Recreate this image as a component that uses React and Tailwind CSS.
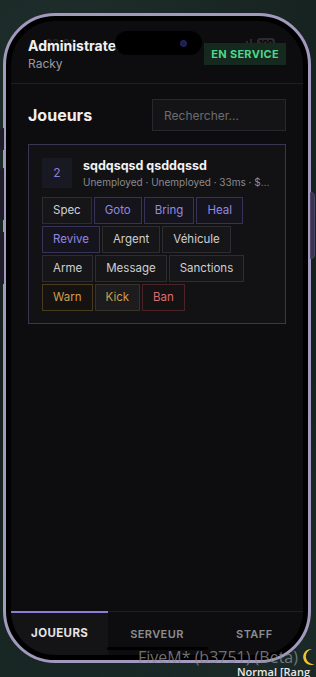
import React, { useState } from "react";

const actions = [
  { label: "Spec", tone: "plain" },
  { label: "Goto", tone: "purple" },
  { label: "Bring", tone: "purple" },
  { label: "Heal", tone: "purple" },
  { label: "Revive", tone: "purple" },
  { label: "Argent", tone: "plain" },
  { label: "Véhicule", tone: "plain" },
  { label: "Arme", tone: "plain" },
  { label: "Message", tone: "plain" },
  { label: "Sanctions", tone: "plain" },
  { label: "Warn", tone: "amber" },
  { label: "Kick", tone: "amberSoft" },
  { label: "Ban", tone: "red" },
];

const toneClass = {
  plain: "border-[#2c2c31] bg-[#161619] text-[#cfcfd2]",
  purple: "border-[#36325a] bg-[#15141d] text-[#9488e0]",
  amber: "border-[#4a3b1f] bg-[#141312] text-[#cf9d4c]",
  amberSoft: "border-[#37322a] bg-[#1c1c1f] text-[#cf9d4c]",
  red: "border-[#4a2328] bg-[#141213] text-[#db6b72]",
};

const tabs = ["Joueurs", "Serveur", "Staff"];

const App = () => {
  const [tab, setTab] = useState("Joueurs");
  const [query, setQuery] = useState("");

  return (
    <div
      className="relative w-[316px] h-[677px] overflow-hidden bg-[#15211f] pt-[13px] pl-[3px]"
      style={{
        backgroundImage:
          "radial-gradient(circle at 20% 10%, #1f2f2c 0%, transparent 45%), radial-gradient(circle at 85% 90%, #1b2a28 0%, transparent 40%), radial-gradient(circle at 10% 95%, #182624 0%, transparent 40%)",
        fontFamily: "Inter, 'Noto Sans', sans-serif",
      }}
    >
      {/* phone side buttons */}
      <div className="absolute left-[0px] top-[128px] w-[4px] h-[22px] rounded-l bg-[#201d2a]" />
      <div className="absolute left-[0px] top-[168px] w-[4px] h-[52px] rounded-l bg-[#201d2a]" />
      <div className="absolute left-[0px] top-[232px] w-[4px] h-[52px] rounded-l bg-[#201d2a]" />
      <div className="absolute left-[310px] top-[192px] w-[5px] h-[67px] rounded-r bg-[#3a3450] border border-[#4d4666]" />

      {/* phone */}
      <div className="w-[308px] h-[650px] rounded-[52px] border-[3px] border-[#a299bf] bg-black p-[5px] flex">
        <div className="relative flex-1 rounded-[44px] bg-[#0d0d10] flex flex-col overflow-hidden">
          {/* status bar (behind header) */}
          <div className="absolute top-[14px] left-[34px] right-[28px] flex items-center justify-between text-[11px] font-semibold text-[#26262a]">
            <span>02:03</span>
            <div className="flex items-center gap-[5px]">
              <div className="flex items-end gap-[2px]">
                <span className="w-[2px] h-[3px] bg-[#2a2a2e]" />
                <span className="w-[2px] h-[5px] bg-[#2a2a2e]" />
                <span className="w-[2px] h-[7px] bg-[#2a2a2e]" />
                <span className="w-[2px] h-[9px] bg-[#2a2a2e]" />
              </div>
              <span className="rounded-[3px] bg-[#2c2c30] px-[2px] text-[8px] leading-[10px] text-black">100</span>
            </div>
          </div>

          {/* header */}
          <div className="relative flex items-center justify-between px-[17px] pt-[15px] pb-[11px] border-b border-[#1f1f23]">
            <div className="flex flex-col">
              <span className="text-[14px] leading-[20px] font-bold text-[#f2f2f2]">Administrateur</span>
              <span className="text-[12px] leading-[16px] text-[#9a9a9e]">Racky</span>
            </div>
            <span className="h-[22px] px-[7px] flex items-center bg-[#15291f] text-[#4fd68a] text-[11px] font-bold tracking-[0.3px]">
              EN SERVICE
            </span>
          </div>

          {/* dynamic island */}
          <div className="absolute top-[10px] left-[104px] w-[87px] h-[24px] rounded-full bg-black flex items-center justify-end pr-[15px]">
            <span className="w-[7px] h-[7px] rounded-full bg-[#1d1f4a] border border-[#2a2d66]" />
          </div>

          {/* content */}
          <div className="flex-1 px-[17px] pt-[15px]">
            <div className="flex items-center justify-between">
              <h2 className="text-[16px] font-bold text-[#f0f0f0]">Joueurs</h2>
              <input
                value={query}
                onChange={(e) => setQuery(e.target.value)}
                placeholder="Rechercher..."
                className="w-[134px] h-[32px] bg-[#141417] border border-[#28282c] px-[11px] text-[12px] text-[#ddd] placeholder:text-[#6c6c70] outline-none"
              />
            </div>

            <div className="mt-[13px] border border-[#3a3550] bg-[#121215] px-[13px] pt-[12px] pb-[12px]">
              <div className="flex items-center gap-[11px]">
                <div className="w-[30px] h-[30px] shrink-0 bg-[#191924] flex items-center justify-center text-[12px] text-[#8c80d6]">
                  2
                </div>
                <div className="min-w-0 flex-1">
                  <div className="text-[12.5px] leading-[18px] font-bold text-[#f2f2f2] truncate">sqdqsqsd qsddqssd</div>
                  <div className="text-[10px] leading-[14px] text-[#8a8a8e] truncate">
                    Unemployed · Unemployed · 33ms · $125,000
                  </div>
                </div>
              </div>

              <div className="mt-[8px] flex flex-wrap gap-[2px]">
                {actions.map((a) => (
                  <button
                    key={a.label}
                    className={`h-[27px] px-[10px] border text-[11.5px] ${toneClass[a.tone]}`}
                  >
                    {a.label}
                  </button>
                ))}
              </div>
            </div>
          </div>

          {/* bottom tabs */}
          <div className="flex border-t border-[#1f1f23] h-[44px]">
            {tabs.map((t) => (
              <button
                key={t}
                onClick={() => setTab(t)}
                className={`flex-1 flex items-center justify-center uppercase tracking-[0.4px] border-t-2 -mt-px ${
                  tab === t
                    ? "border-[#8a7fd8] bg-[#141417] text-[#e4e4e6] font-bold text-[11.5px]"
                    : "border-transparent text-[#8d8d91] font-semibold text-[11px]"
                }`}
              >
                {t}
              </button>
            ))}
          </div>

          {/* home indicator */}
          <div className="absolute bottom-[5px] left-[96px] w-[101px] h-[3px] rounded-full bg-black" />
        </div>
      </div>

      {/* game overlay text */}
      <div
        className="absolute left-[138px] top-[645px] text-[16px] text-[#8b8b8b]/80 whitespace-nowrap"
        style={{ fontFamily: "'Open Sans', 'Noto Sans', sans-serif" }}
      >
        FiveM* (b3751) (Beta)
      </div>
      <div
        className="absolute left-[237px] top-[664px] text-[11px] font-semibold text-[#e8e8e8] whitespace-nowrap"
        style={{ fontFamily: "'Open Sans', 'Noto Sans', sans-serif" }}
      >
        Normal [Rang
      </div>
      <svg className="absolute left-[300px] top-[648px]" width="16" height="18" viewBox="0 0 16 18">
        <path d="M12 1 A8 8 0 1 0 15 16 A7 7 0 0 1 12 1 Z" fill="#f2c230" />
      </svg>
    </div>
  );
};

export default App;
